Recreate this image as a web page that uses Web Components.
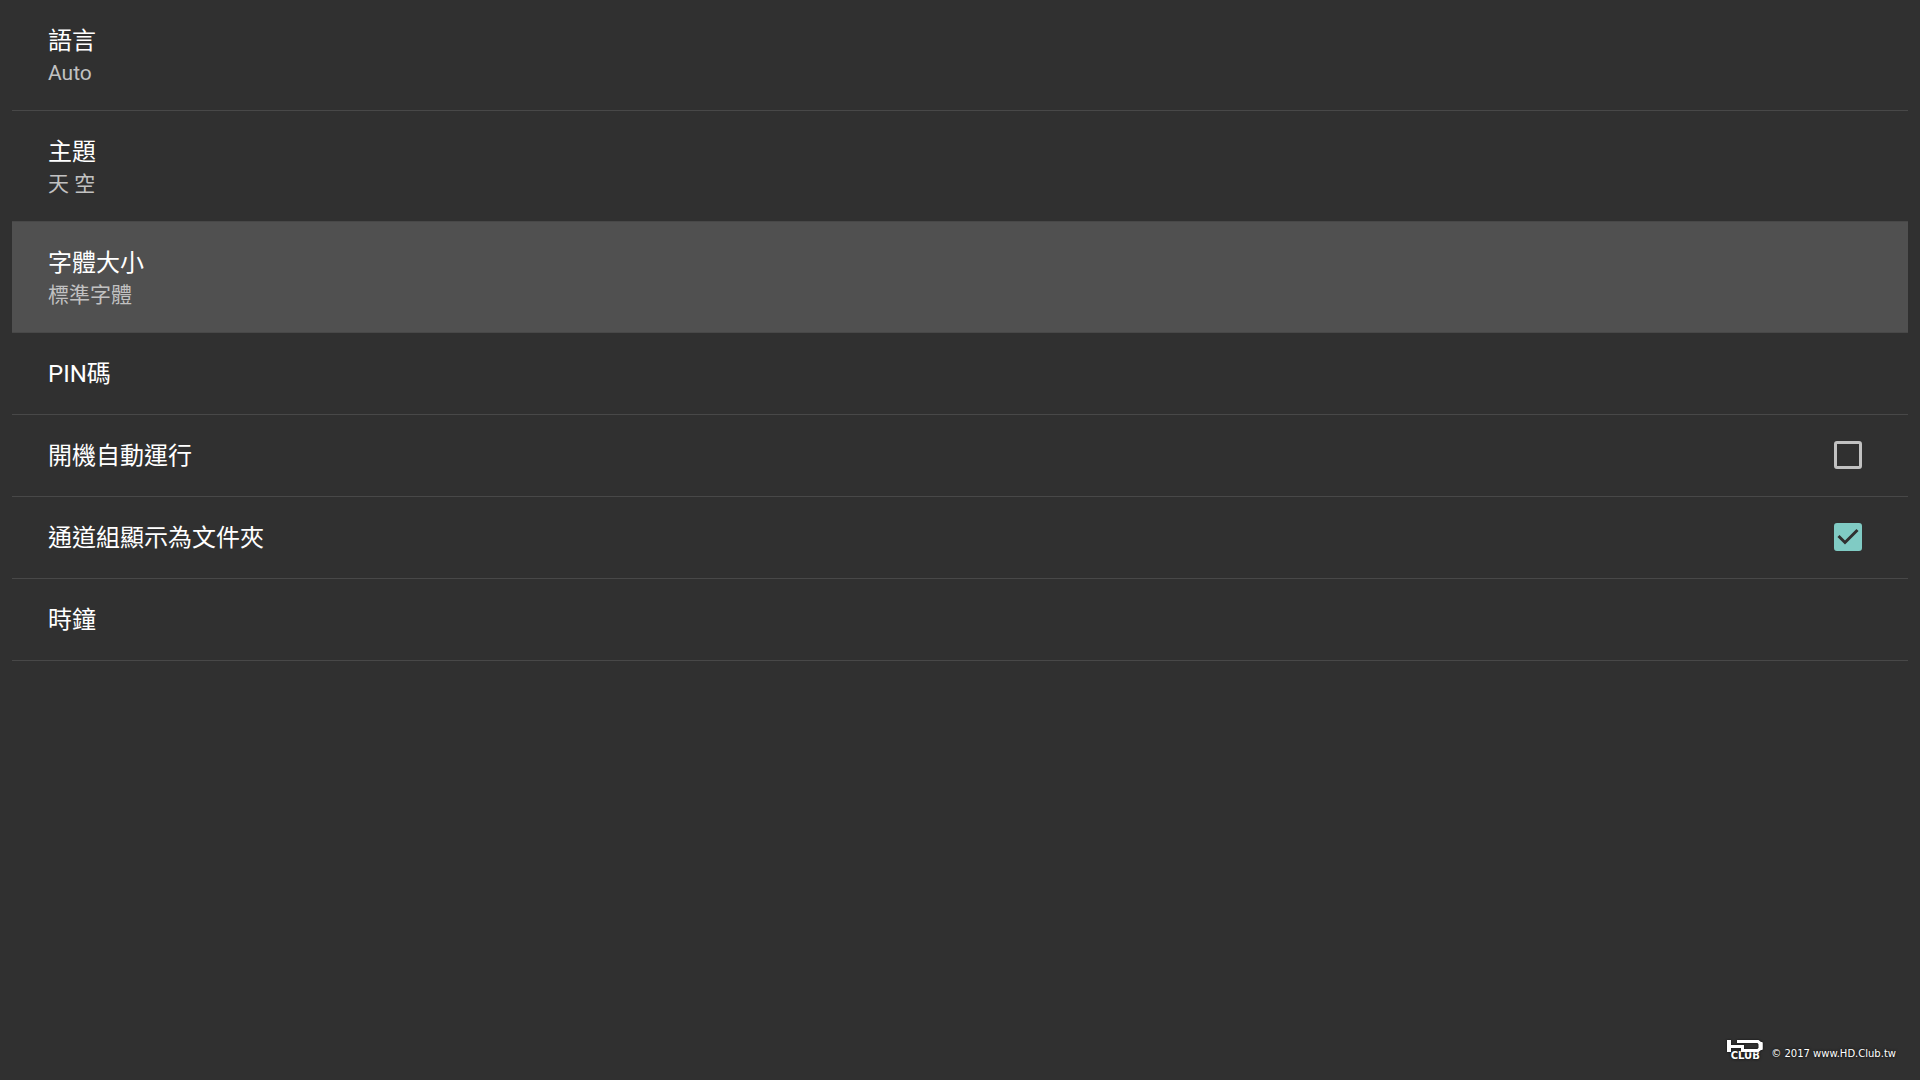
<!DOCTYPE html>
<html lang="zh-Hant">
<head>
<meta charset="utf-8">
<title>設定</title>
<style>
html, body { margin: 0; min-height: 100%; }
body { background: #303030; color: #fff; font-family: Roboto, "Noto Sans CJK TC", sans-serif; font-size: 24px; }
</style>
</head>
<body>
<settings-page></settings-page>
<script>
class SettingRow extends HTMLElement {
  connectedCallback() {
    const summary = this.hasAttribute('summary');
    this.attachShadow({ mode: 'open' }).innerHTML = `
      <style>
        :host { display: block; border-bottom: 1px solid #484848; }
        :host([selected]) { background: #505050; }
        button { all: unset; box-sizing: border-box; display: flex; flex-direction: column; width: 100%; padding: 25px 36px 21px; cursor: pointer; }
        .title { line-height: 33px; }
        .summary { font-size: 21px; line-height: 31px; color: #c1c1c1; }
        .single { padding-bottom: 23px; }
      </style>
      <button type="button" class="${summary ? '' : 'single'}">
        <span class="title"><slot></slot></span>
        ${summary ? '<span class="summary"><slot name="summary"></slot></span>' : ''}
      </button>`;
  }
}
class SettingCheck extends HTMLElement {
  connectedCallback() {
    this.attachShadow({ mode: 'open' }).innerHTML = `
      <style>
        :host { display: block; border-bottom: 1px solid #484848; }
        label { display: flex; align-items: flex-end; justify-content: space-between; padding: 25px 46px 23px 36px; line-height: 33px; cursor: pointer; }
        .box { display: grid; width: 28px; height: 28px; padding-bottom: 4px; }
        input, svg { grid-area: 1 / 1; width: 28px; height: 28px; margin: 0; }
        input { appearance: none; box-sizing: border-box; border: 3px solid #c1c1c1; border-radius: 3px; }
        input:checked { background: #80cbc4; border-color: #80cbc4; }
        svg { visibility: hidden; pointer-events: none; }
        input:checked + svg { visibility: visible; }
      </style>
      <label>
        <span><slot></slot></span>
        <span class="box">
          <input type="checkbox" ${this.hasAttribute('checked') ? 'checked' : ''}>
          <svg viewBox="0 0 28 28" aria-hidden="true"><path d="M4.500 13 L11 19.500 L23.500 7" fill="none" stroke="#303030" stroke-width="3"/></svg>
        </span>
      </label>`;
  }
}
class ClubCredit extends HTMLElement {
  connectedCallback() {
    this.attachShadow({ mode: 'open' }).innerHTML = `
      <style>
        :host { display: flex; align-items: flex-end; gap: 8px; font: 10px/12px "DejaVu Sans", sans-serif; text-shadow: 0 0 3px #000; }
        .logo { display: flex; flex-direction: column; align-items: center; width: 36px; }
        svg { width: 36px; height: 12px; filter: drop-shadow(0 0 1px #111); }
        .club { font-weight: bold; line-height: 8px; }
      </style>
      <span class="logo">
        <svg viewBox="0 0 36 12" role="img" aria-label="HD" fill="none" stroke="#fff"><path d="M2 0V12M33.500 2V10" stroke-width="4"/><path d="M4 6.500H15.500V10.500H31L34 8V4L31 1.500H10" stroke-width="3"/></svg>
        <span class="club">CLUB</span>
      </span>
      <span><slot></slot></span>`;
  }
}
class SettingsPage extends HTMLElement {
  connectedCallback() {
    this.attachShadow({ mode: 'open' }).innerHTML = `
      <style>
        :host { display: flex; flex-direction: column; min-height: 100vh; box-sizing: border-box; padding: 0 12px 20px; }
        main { flex: 1; }
        footer { display: flex; justify-content: flex-end; padding-right: 12px; }
      </style>
      <main>
        <setting-row summary>語言<span slot="summary">Auto</span></setting-row>
        <setting-row summary>主題<span slot="summary">天 空</span></setting-row>
        <setting-row summary selected>字體大小<span slot="summary">標準字體</span></setting-row>
        <setting-row>PIN碼</setting-row>
        <setting-check>開機自動運行</setting-check>
        <setting-check checked>通道組顯示為文件夾</setting-check>
        <setting-row>時鐘</setting-row>
      </main>
      <footer><club-credit>© 2017 www.HD.Club.tw</club-credit></footer>`;
  }
}
customElements.define('setting-row', SettingRow);
customElements.define('setting-check', SettingCheck);
customElements.define('club-credit', ClubCredit);
customElements.define('settings-page', SettingsPage);
</script>
</body>
</html>
